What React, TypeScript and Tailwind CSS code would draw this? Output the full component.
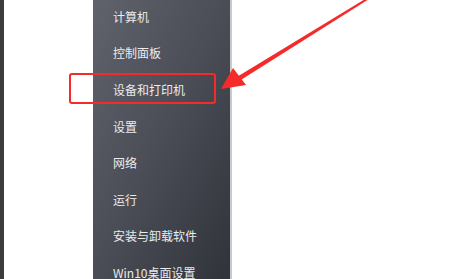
const items = [
  "计算机",
  "控制面板",
  "设备和打印机",
  "设置",
  "网络",
  "运行",
  "安装与卸载软件",
  "Win10桌面设置",
];

export default function App() {
  return (
    <div className="relative flex h-[279px] w-[456px] overflow-hidden bg-white">
      <div className="w-[4px] bg-[#3c3c3c]" />
      <div className="w-[89px] bg-white" />
      <div className="w-[137px] bg-gradient-to-br from-[#60636c] via-[#4a4d55] to-[#30333a]">
        <div className="-mt-[1.5px] flex flex-col">
          {items.map((t) => (
            <div
              key={t}
              className="flex h-[36.6px] items-center pl-[20px] text-[12px] text-[#ebebeb]"
              style={{ fontFamily: '"Noto Sans CJK SC", "Noto Sans", sans-serif' }}
            >
              {t}
            </div>
          ))}
        </div>
      </div>
      <div className="w-[2px] bg-[#c8c9cc]" />
      <div className="flex-1 bg-white" />

      <div className="absolute left-[69px] top-[73px] h-[31px] w-[147px] rounded-[3px] border-[2.5px] border-[#f52a2a]" />

      <svg className="absolute left-0 top-0" width="456" height="279" viewBox="0 0 456 279">
        <polygon points="372.5,-3.15 239.2,80.9 236.8,77.1 371.5,-4.85" fill="#f52a2a" />
        <polygon points="221,89 233,68 246,85" fill="#f52a2a" />
      </svg>
    </div>
  );
}
